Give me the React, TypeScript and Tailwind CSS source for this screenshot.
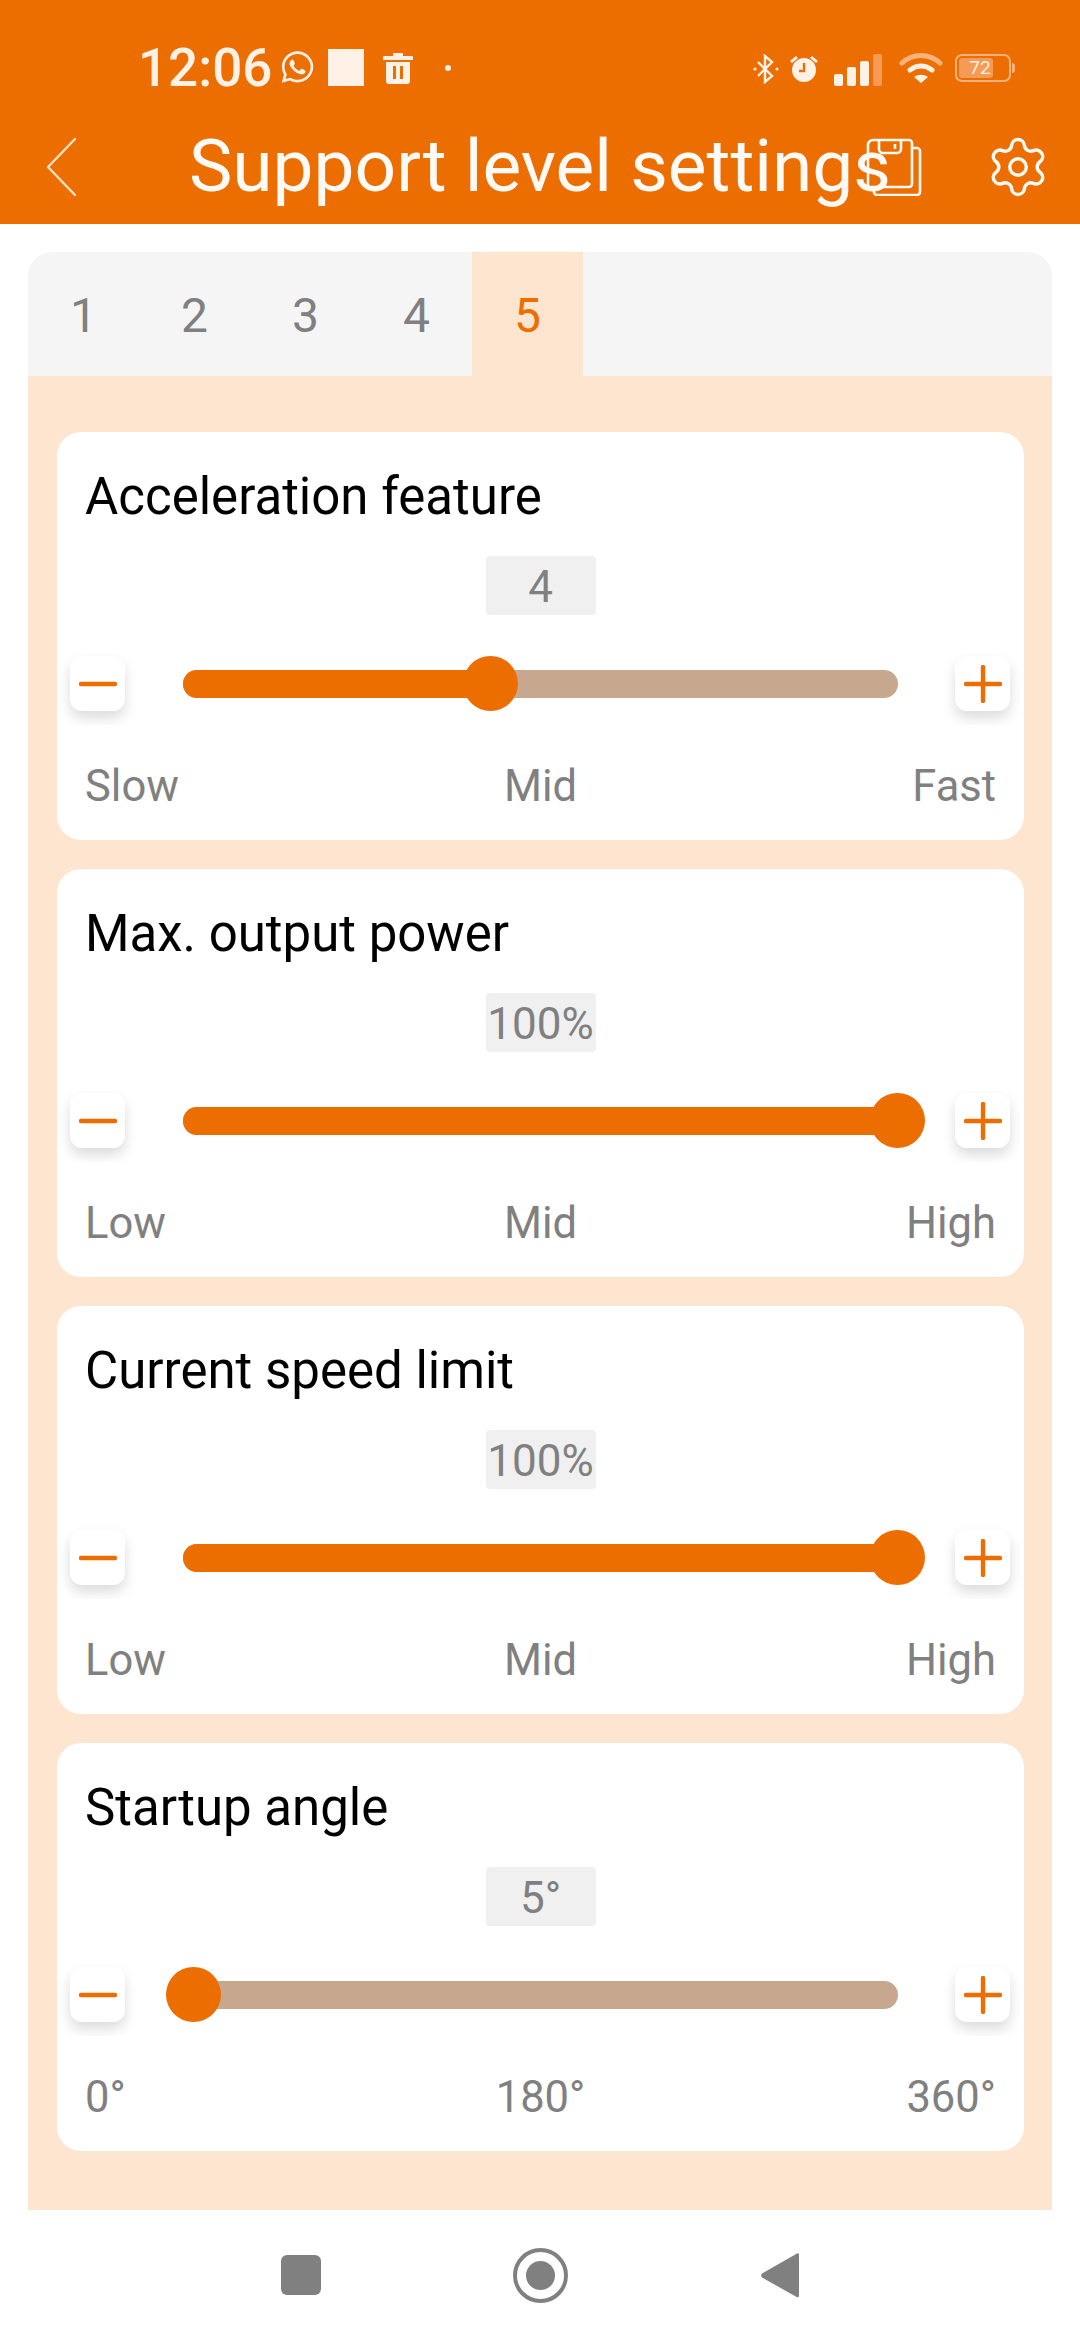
import { Settings } from "lucide-react";
import { FaWhatsapp } from "react-icons/fa";

type SliderCard = {
  title: string;
  value: string;
  knob: number;
  low: string;
  mid: string;
  high: string;
};

const cards: SliderCard[] = [
  { title: "Acceleration feature", value: "4", knob: 490, low: "Slow", mid: "Mid", high: "Fast" },
  { title: "Max. output power", value: "100%", knob: 897, low: "Low", mid: "Mid", high: "High" },
  { title: "Current speed limit", value: "100%", knob: 897, low: "Low", mid: "Mid", high: "High" },
  { title: "Startup angle", value: "5°", knob: 193, low: "0°", mid: "180°", high: "360°" },
];

function StepButton({ kind }: { kind: "minus" | "plus" }) {
  return (
    <div className="w-[55px] h-[55px] shrink-0 rounded-[12px] bg-white shadow-[0_7px_13px_rgba(0,0,0,0.14)] flex items-center justify-center">
      <svg width="38" height="38" viewBox="0 0 38 38" fill="none" stroke="#ec6e00" strokeWidth="4.4" strokeLinecap="round">
        <path d="M2 19h34" />
        {kind === "plus" && <path d="M19 2v34" />}
      </svg>
    </div>
  );
}

function Card({ card }: { card: SliderCard }) {
  // knob values are page x coordinates, the track starts at 183 and is 715 wide
  const knobLeft = card.knob - 183;
  return (
    <div className="h-[408px] bg-white rounded-[24px] overflow-hidden flex flex-col">
      <div className="h-[124px] px-[28px] pt-[34px] text-[51px] leading-[62px] text-black whitespace-nowrap">{card.title}</div>
      <div className="flex justify-center">
        <div className="w-[110px] h-[59px] rounded-[4px] bg-[#f0f0f0] text-[#808080] text-[44px] leading-[63px] text-center">
          {card.value}
        </div>
      </div>
      <div className="mt-[25px] h-[85px] pt-[16px] pl-[13px] pr-[14px] flex overflow-hidden">
        <StepButton kind="minus" />
        <div className="relative w-[715px] h-[55px] ml-[58px] mr-[57px] flex items-center">
          <div className="w-full h-[28px] rounded-full bg-[#c7a88f] overflow-hidden">
            <div className="h-full bg-[#ec6e00]" style={{ width: knobLeft }} />
          </div>
          <div
            className="absolute top-0 w-[55px] h-[55px] -ml-[27px] rounded-full bg-[#ec6e00]"
            style={{ left: knobLeft }}
          />
        </div>
        <StepButton kind="plus" />
      </div>
      <div className="px-[28px] mt-[34px] flex justify-between relative text-[43.5px] leading-[56px] text-[#808080]">
        <span>{card.low}</span>
        <span className="absolute left-0 right-0 text-center">{card.mid}</span>
        <span>{card.high}</span>
      </div>
    </div>
  );
}

function StatusBar() {
  return (
    <div className="h-[126px] pt-[40px] pl-[138px] pr-[65px] flex items-start text-[#fff1e6]">
      <span className="text-[53px] leading-[56px] font-medium">12:06</span>
      <FaWhatsapp className="ml-[8px] mt-[9px] w-[35px] h-[36px]" />
      <div className="ml-[13px] mt-[9px] w-[36px] h-[37px] bg-[#fff1e6]" />
      <svg className="ml-[19px] mt-[13px]" width="30" height="31" viewBox="0 0 30 31" fill="#fff1e6">
        <path d="M10 0h10v3h9a1 1 0 0 1 1 1v3H0V4a1 1 0 0 1 1-1h9z" />
        <path fillRule="evenodd" d="M3 9h24v19a3 3 0 0 1-3 3H6a3 3 0 0 1-3-3zM10 13v13h3V13zM17 13v13h3V13z" />
      </svg>
      <div className="ml-[32px] mt-[25px] w-[6px] h-[6px] rounded-full bg-[#fff1e6]" />
      <div className="flex-1" />
      <svg className="mt-[14px]" width="26" height="30" viewBox="0 0 26 30" fill="none" stroke="#fff1e6" strokeWidth="2.4">
        <path d="M5 8l14 14-7 6V2l7 6L5 22" />
        <circle cx="2" cy="15" r="1.6" fill="#fff1e6" stroke="none" />
        <circle cx="24" cy="15" r="1.6" fill="#fff1e6" stroke="none" />
      </svg>
      <svg className="ml-[10px] mt-[14px]" width="30" height="30" viewBox="0 0 30 30" fill="#fff1e6">
        <circle cx="15" cy="16" r="12" />
        <path d="M1 7l6-5 2 2-6 5zM29 7l-6-5-2 2 6 5z" />
        <path d="M15 9v8h-5" fill="none" stroke="#ec6e00" strokeWidth="2.4" />
      </svg>
      <div className="ml-[15px] mt-[14px] h-[32px] flex items-end gap-[4px]">
        <div className="w-[9px] h-[12px] rounded-[2px] bg-[#fff1e6]" />
        <div className="w-[9px] h-[19px] rounded-[2px] bg-[#fff1e6]" />
        <div className="w-[9px] h-[25px] rounded-[2px] bg-[#fff1e6]" />
        <div className="w-[9px] h-[32px] rounded-[2px] bg-[#f79a55]" />
      </div>
      <svg className="ml-[17px] mt-[12px]" width="44" height="32" viewBox="0 0 44 32" fill="none" strokeLinecap="round">
        <path d="M3 11C14 1 30 1 41 11" stroke="#f9b27c" strokeWidth="5" />
        <path d="M11 18c7-5 15-5 22 0" stroke="#fff1e6" strokeWidth="5" />
        <path d="M22 31l-7-6c4-3 10-3 14 0z" fill="#fff1e6" />
      </svg>
      <div className="ml-[12px] mt-[14px] flex items-center">
        <div className="relative w-[56px] h-[28px] rounded-[7px] border-[2px] border-[#f9b27c] p-[2px]">
          <div className="h-full w-[34px] rounded-[3px] bg-[#f79a55]" />
          <span className="absolute inset-0 text-center text-[19px] leading-[24px] text-[#fff1e6] pr-[6px]">72</span>
        </div>
        <div className="ml-[1px] w-[3px] h-[10px] rounded-r-full bg-[#f9b27c]" />
      </div>
    </div>
  );
}

function TitleBar() {
  return (
    <div className="relative h-[98px] flex justify-center">
      <span className="text-[73px] leading-[80px] text-[#fffaf5] whitespace-nowrap">Support level settings</span>
      <svg className="absolute left-[46px] top-[11px]" width="32" height="60" viewBox="0 0 32 60" fill="none" stroke="#ffe3c9" strokeWidth="2.4" strokeLinecap="round" strokeLinejoin="round">
        <path d="M29 2L2 30l27 28" />
      </svg>
      <svg className="absolute left-[865px] top-[12px]" width="58" height="58" viewBox="0 0 56 58" fill="none" stroke="#fffaf5" strokeWidth="2.6" strokeLinejoin="round">
        <path d="M7 2h36a3 3 0 0 1 3 3v41a3 3 0 0 1-3 3H2V7a5 5 0 0 1 5-5z" />
        <path d="M46 10h5a3 3 0 0 1 3 3v41a3 3 0 0 1-3 3H11a3 3 0 0 1-3-3v-5" />
        <path d="M13 2v9a4 4 0 0 0 4 4h14a4 4 0 0 0 4-4V2" />
        <path d="M29 6v5" />
      </svg>
      <Settings className="absolute left-[985px] top-[8px] w-[66px] h-[66px] text-[#fffaf5]" strokeWidth={1.25} />
    </div>
  );
}

function NavBar() {
  return (
    <div className="h-[130px] flex items-center justify-center">
      <div className="w-[40px] h-[40px] rounded-[6px] bg-[#808080]" />
      <div className="ml-[192px] w-[55px] h-[55px] rounded-full border-[4px] border-[#808080] flex items-center justify-center">
        <div className="w-[29px] h-[29px] rounded-full bg-[#808080]" />
      </div>
      <svg className="ml-[193px]" width="38" height="46" viewBox="0 0 38 46" fill="#808080">
        <path d="M36 1.5a1.5 1.5 0 0 1 2 1V44a1.5 1.5 0 0 1-2.4 1L1 25.5a3 3 0 0 1 0-4z" />
      </svg>
    </div>
  );
}

export default function App() {
  return (
    <div className="w-[1080px] h-[2340px] bg-white flex flex-col font-['Roboto',sans-serif]">
      <div className="h-[224px] bg-[#ec6e00]">
        <StatusBar />
        <TitleBar />
      </div>
      <div className="mt-[28px] mx-[28px] w-[1024px] rounded-t-[24px] overflow-hidden">
        <div className="h-[124px] bg-[#f5f5f5] flex">
          {[1, 2, 3, 4, 5].map((n) => (
            <div
              key={n}
              className={
                n === 5
                  ? "w-[111px] pt-[4px] flex items-center justify-center text-[48px] text-[#ec6e00] bg-[#fde5d0]"
                  : "w-[111px] pt-[4px] flex items-center justify-center text-[48px] text-[#808080]"
              }
            >
              {n}
            </div>
          ))}
        </div>
        <div className="h-[1834px] bg-[#fde5d0] pl-[29px] pr-[28px] pt-[56px] flex flex-col gap-[29px]">
          {cards.map((c) => (
            <Card key={c.title} card={c} />
          ))}
        </div>
      </div>
      <NavBar />
    </div>
  );
}
